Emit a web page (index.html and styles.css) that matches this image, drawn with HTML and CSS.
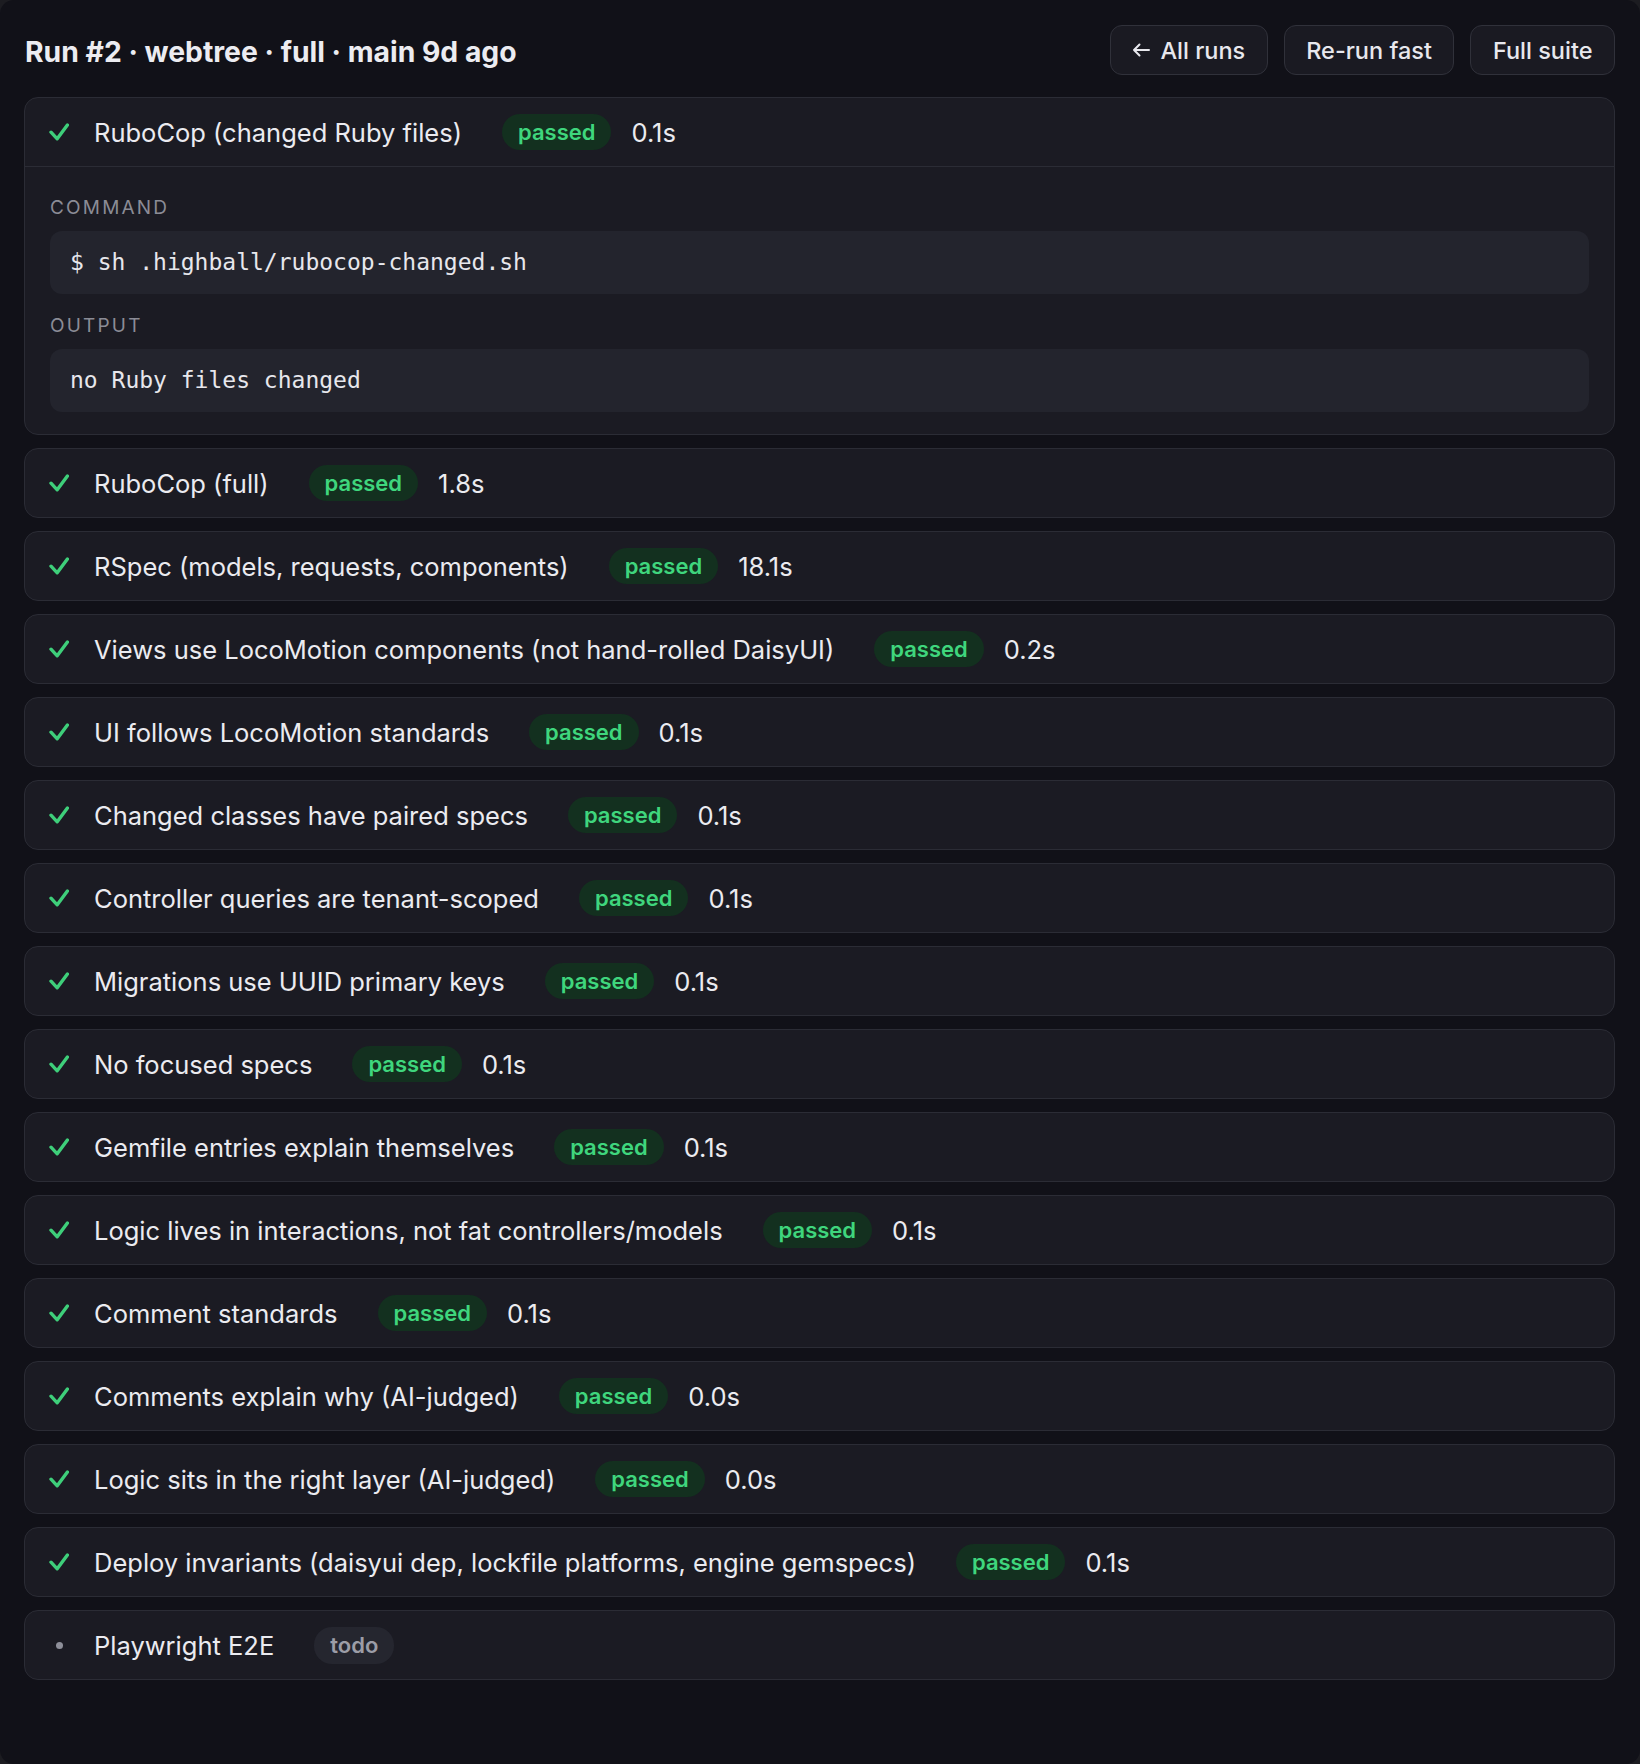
FILE: index.html
```html
<!DOCTYPE html>
<html lang="en">
<head>
<meta charset="utf-8">
<title>Run #2</title>
<link rel="stylesheet" href="styles.css">
</head>
<body>
<div class="app">
  <header class="topbar">
    <h1 class="title">Run #2 · webtree · full · main 9d ago</h1>
    <div class="actions">
      <button class="btn"><svg class="arrow" viewBox="0 0 18 14" width="18" height="14"><path d="M17 7H2M7.5 1.5L2 7l5.5 5.5" fill="none" stroke="currentColor" stroke-width="2" stroke-linecap="round" stroke-linejoin="round"/></svg>All runs</button>
      <button class="btn">Re-run fast</button>
      <button class="btn">Full suite</button>
    </div>
  </header>

  <div class="checks">
    <section class="card">
      <div class="row">
        <svg class="icon-ok" viewBox="0 0 20 18" width="20" height="18"><path d="M2 9.2l6.2 6.6L18.4 2" fill="none" stroke="currentColor" stroke-width="3.4" stroke-linecap="round" stroke-linejoin="round"/></svg>
        <span class="name">RuboCop (changed Ruby files)</span>
        <span class="badge badge-pass">passed</span>
        <span class="dur">0.1s</span>
      </div>
      <div class="detail">
        <div class="label">Command</div>
        <pre class="code">$ sh .highball/rubocop-changed.sh</pre>
        <div class="label label-second">Output</div>
        <pre class="code">no Ruby files changed</pre>
      </div>
    </section>

    <section class="card"><div class="row"><svg class="icon-ok" viewBox="0 0 20 18" width="20" height="18"><path d="M2 9.2l6.2 6.6L18.4 2" fill="none" stroke="currentColor" stroke-width="3.4" stroke-linecap="round" stroke-linejoin="round"/></svg><span class="name">RuboCop (full)</span><span class="badge badge-pass">passed</span><span class="dur">1.8s</span></div></section>

    <section class="card"><div class="row"><svg class="icon-ok" viewBox="0 0 20 18" width="20" height="18"><path d="M2 9.2l6.2 6.6L18.4 2" fill="none" stroke="currentColor" stroke-width="3.4" stroke-linecap="round" stroke-linejoin="round"/></svg><span class="name">RSpec (models, requests, components)</span><span class="badge badge-pass">passed</span><span class="dur">18.1s</span></div></section>

    <section class="card"><div class="row"><svg class="icon-ok" viewBox="0 0 20 18" width="20" height="18"><path d="M2 9.2l6.2 6.6L18.4 2" fill="none" stroke="currentColor" stroke-width="3.4" stroke-linecap="round" stroke-linejoin="round"/></svg><span class="name">Views use LocoMotion components (not hand-rolled DaisyUI)</span><span class="badge badge-pass">passed</span><span class="dur">0.2s</span></div></section>

    <section class="card"><div class="row"><svg class="icon-ok" viewBox="0 0 20 18" width="20" height="18"><path d="M2 9.2l6.2 6.6L18.4 2" fill="none" stroke="currentColor" stroke-width="3.4" stroke-linecap="round" stroke-linejoin="round"/></svg><span class="name">UI follows LocoMotion standards</span><span class="badge badge-pass">passed</span><span class="dur">0.1s</span></div></section>

    <section class="card"><div class="row"><svg class="icon-ok" viewBox="0 0 20 18" width="20" height="18"><path d="M2 9.2l6.2 6.6L18.4 2" fill="none" stroke="currentColor" stroke-width="3.4" stroke-linecap="round" stroke-linejoin="round"/></svg><span class="name">Changed classes have paired specs</span><span class="badge badge-pass">passed</span><span class="dur">0.1s</span></div></section>

    <section class="card"><div class="row"><svg class="icon-ok" viewBox="0 0 20 18" width="20" height="18"><path d="M2 9.2l6.2 6.6L18.4 2" fill="none" stroke="currentColor" stroke-width="3.4" stroke-linecap="round" stroke-linejoin="round"/></svg><span class="name">Controller queries are tenant-scoped</span><span class="badge badge-pass">passed</span><span class="dur">0.1s</span></div></section>

    <section class="card"><div class="row"><svg class="icon-ok" viewBox="0 0 20 18" width="20" height="18"><path d="M2 9.2l6.2 6.6L18.4 2" fill="none" stroke="currentColor" stroke-width="3.4" stroke-linecap="round" stroke-linejoin="round"/></svg><span class="name">Migrations use UUID primary keys</span><span class="badge badge-pass">passed</span><span class="dur">0.1s</span></div></section>

    <section class="card"><div class="row"><svg class="icon-ok" viewBox="0 0 20 18" width="20" height="18"><path d="M2 9.2l6.2 6.6L18.4 2" fill="none" stroke="currentColor" stroke-width="3.4" stroke-linecap="round" stroke-linejoin="round"/></svg><span class="name">No focused specs</span><span class="badge badge-pass">passed</span><span class="dur">0.1s</span></div></section>

    <section class="card"><div class="row"><svg class="icon-ok" viewBox="0 0 20 18" width="20" height="18"><path d="M2 9.2l6.2 6.6L18.4 2" fill="none" stroke="currentColor" stroke-width="3.4" stroke-linecap="round" stroke-linejoin="round"/></svg><span class="name">Gemfile entries explain themselves</span><span class="badge badge-pass">passed</span><span class="dur">0.1s</span></div></section>

    <section class="card"><div class="row"><svg class="icon-ok" viewBox="0 0 20 18" width="20" height="18"><path d="M2 9.2l6.2 6.6L18.4 2" fill="none" stroke="currentColor" stroke-width="3.4" stroke-linecap="round" stroke-linejoin="round"/></svg><span class="name">Logic lives in interactions, not fat controllers/models</span><span class="badge badge-pass">passed</span><span class="dur">0.1s</span></div></section>

    <section class="card"><div class="row"><svg class="icon-ok" viewBox="0 0 20 18" width="20" height="18"><path d="M2 9.2l6.2 6.6L18.4 2" fill="none" stroke="currentColor" stroke-width="3.4" stroke-linecap="round" stroke-linejoin="round"/></svg><span class="name">Comment standards</span><span class="badge badge-pass">passed</span><span class="dur">0.1s</span></div></section>

    <section class="card"><div class="row"><svg class="icon-ok" viewBox="0 0 20 18" width="20" height="18"><path d="M2 9.2l6.2 6.6L18.4 2" fill="none" stroke="currentColor" stroke-width="3.4" stroke-linecap="round" stroke-linejoin="round"/></svg><span class="name">Comments explain why (AI-judged)</span><span class="badge badge-pass">passed</span><span class="dur">0.0s</span></div></section>

    <section class="card"><div class="row"><svg class="icon-ok" viewBox="0 0 20 18" width="20" height="18"><path d="M2 9.2l6.2 6.6L18.4 2" fill="none" stroke="currentColor" stroke-width="3.4" stroke-linecap="round" stroke-linejoin="round"/></svg><span class="name">Logic sits in the right layer (AI-judged)</span><span class="badge badge-pass">passed</span><span class="dur">0.0s</span></div></section>

    <section class="card"><div class="row"><svg class="icon-ok" viewBox="0 0 20 18" width="20" height="18"><path d="M2 9.2l6.2 6.6L18.4 2" fill="none" stroke="currentColor" stroke-width="3.4" stroke-linecap="round" stroke-linejoin="round"/></svg><span class="name">Deploy invariants (daisyui dep, lockfile platforms, engine gemspecs)</span><span class="badge badge-pass">passed</span><span class="dur">0.1s</span></div></section>

    <section class="card"><div class="row"><span class="icon-todo"><span class="dot"></span></span><span class="name">Playwright E2E</span><span class="badge badge-todo">todo</span></div></section>
  </div>
</div>
</body>
</html>
```

FILE: styles.css
```css
* { box-sizing: border-box; }

html, body {
  margin: 0;
  padding: 0;
  background: #1c1c21;
}

body {
  font-family: Inter, "Noto Sans", "Liberation Sans", sans-serif;
  color: #e9e9ef;
}

.app {
  min-height: 1764px;
  background: #111118;
  border-radius: 14px;
  padding: 25px 25px 40px 24px;
}

.topbar {
  display: flex;
  align-items: center;
  justify-content: space-between;
  height: 50px;
  margin-bottom: 22px;
}

.title {
  margin: 0;
  padding: 4px 0 0 1px;
  font-size: 28.3px;
  font-weight: 700;
  color: #ececf1;
}

.actions {
  display: flex;
  gap: 16px;
}

.btn {
  display: flex;
  align-items: center;
  gap: 10px;
  height: 50px;
  padding: 0 21.5px;
  background: #1a1a22;
  border: 1px solid #30313a;
  border-radius: 12px;
  color: #e8e8ee;
  font-family: inherit;
  font-size: 23.5px;
  font-weight: 500;
}

.arrow { color: #e8e8ee; }

.checks {
  display: flex;
  flex-direction: column;
  gap: 13px;
}

.card {
  background: #1b1b23;
  border: 1px solid #2b2c35;
  border-radius: 14px;
  overflow: hidden;
}

.row {
  display: flex;
  align-items: center;
  height: 68px;
  padding: 0 24px;
}

.icon-ok {
  color: #3ecf7a;
  flex: none;
  margin-right: 25px;
}

.icon-todo {
  width: 20px;
  margin-right: 25px;
  display: flex;
  justify-content: center;
  flex: none;
}

.dot {
  width: 7px;
  height: 7px;
  border-radius: 50%;
  background: #8e8f99;
}

.name {
  font-size: 25.5px;
  font-weight: 400;
  color: #ebebf0;
  margin-right: 40px;
  white-space: nowrap;
}

.badge {
  display: inline-flex;
  align-items: center;
  height: 36px;
  padding: 0 16px;
  border-radius: 18px;
  font-size: 22px;
  font-weight: 600;
  line-height: 1;
}

.badge-pass {
  background: #13301f;
  color: #3fd67d;
  margin-right: 20px;
}

.badge-todo {
  background: #25262f;
  color: #9c9da7;
  height: 37px;
}

.dur {
  font-size: 25.5px;
  color: #ebebf0;
}

.detail {
  border-top: 1px solid #2b2c35;
  padding: 28px 25px 22px 25px;
}

.label {
  font-size: 19px;
  line-height: 26px;
  letter-spacing: 2.2px;
  text-transform: uppercase;
  color: #8b8c96;
  margin-bottom: 10px;
}

.label-second { margin-top: 19px; }

.code {
  margin: 0;
  background: #23242d;
  border-radius: 12px;
  padding: 16px 20px;
  font-family: "DejaVu Sans Mono", "Liberation Mono", monospace;
  font-size: 23px;
  line-height: 31px;
  color: #e7e7ec;
}
```
